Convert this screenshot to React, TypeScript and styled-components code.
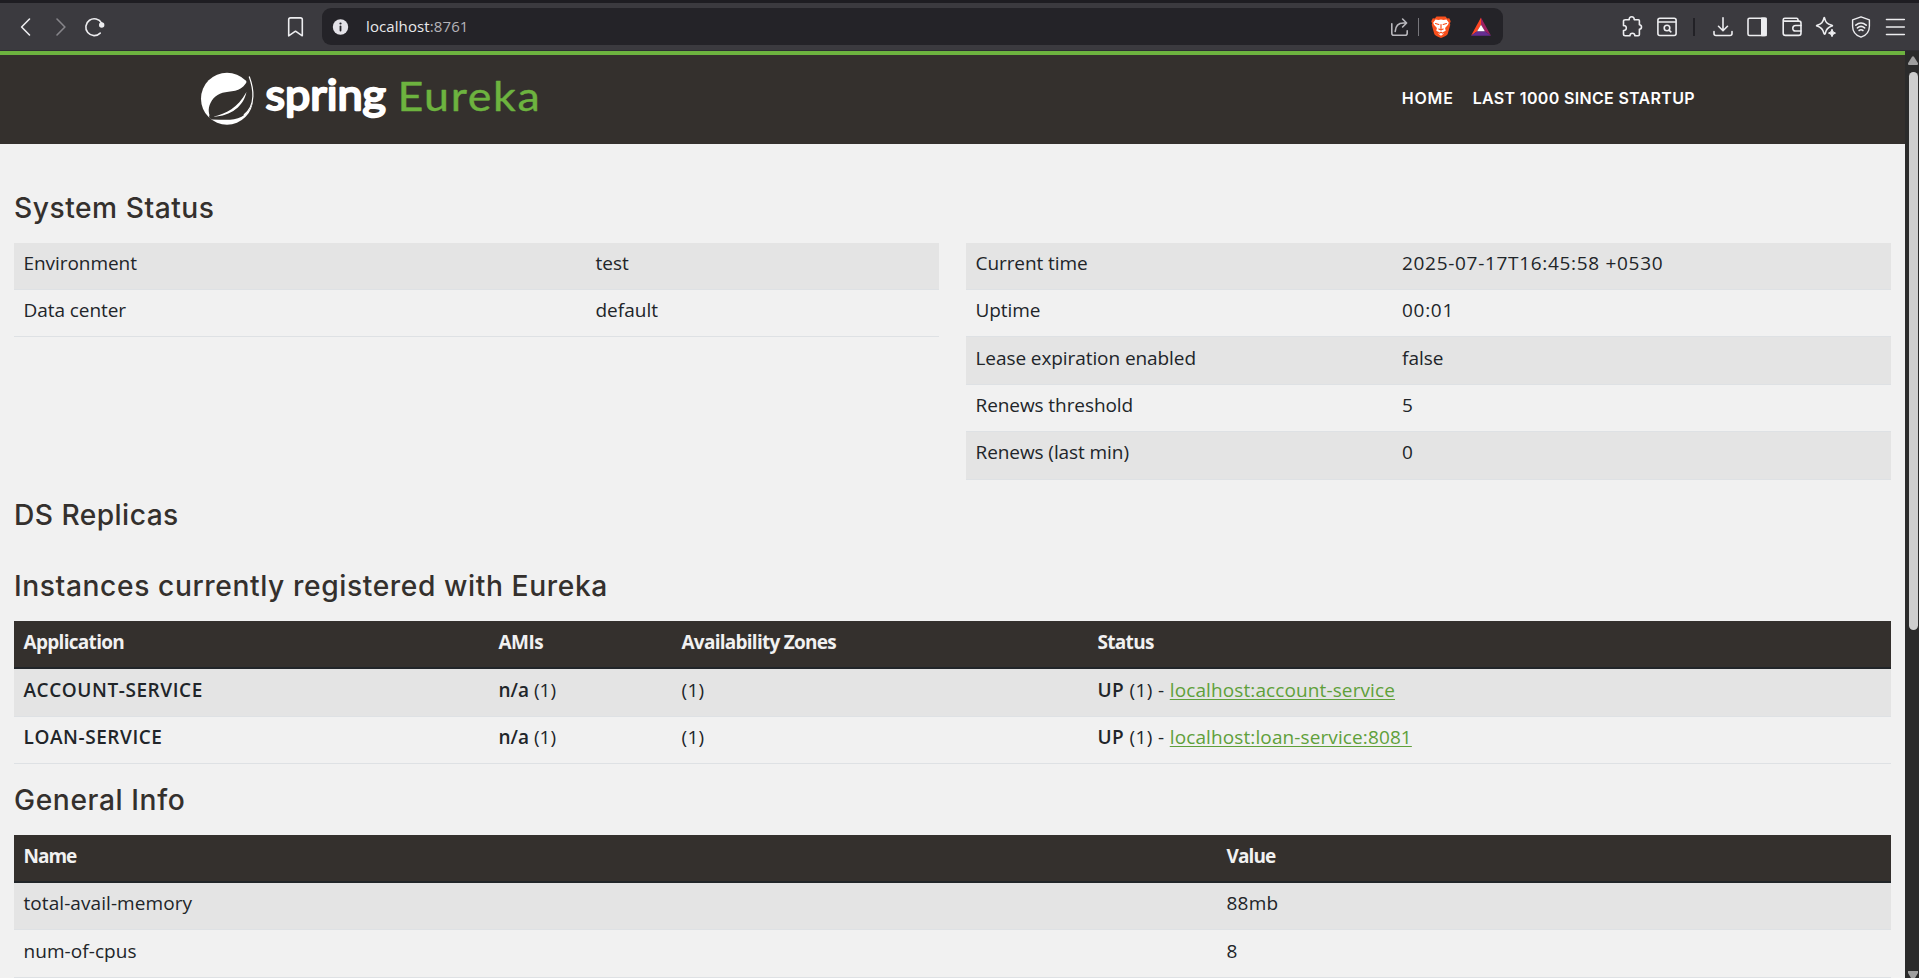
import React from 'react';
import styled, { createGlobalStyle } from 'styled-components';

const GlobalStyle = createGlobalStyle`
  * { box-sizing: border-box; }
  body { margin: 0; background: #f1f1f1; overflow: hidden; }
`;

const Window = styled.div`
  display: flex;
  flex-direction: column;
  width: 1919px;
  height: 978px;
  overflow: hidden;
  font-family: 'Open Sans', sans-serif;
`;

/* Browser chrome */
const Toolbar = styled.div`
  display: flex;
  align-items: center;
  flex: none;
  height: 51px;
  padding: 0 12px 0 14px;
  background: #3b3a3f;
  border-top: 3px solid #1e1d22;
  border-bottom: 1px solid #2f2e33;
`;

const IconGroup = styled.div<{ $gap: number; $before?: number }>`
  display: flex;
  align-items: center;
  gap: ${p => p.$gap}px;
  margin-left: ${p => p.$before ?? 0}px;
`;

const Icon = styled.svg<{ $dim?: boolean }>`
  display: block;
  flex: none;
  width: 24px;
  height: 24px;
  fill: none;
  stroke: ${p => (p.$dim ? '#86858a' : '#ededf0')};
  stroke-width: 1.6;
  stroke-linecap: round;
  stroke-linejoin: round;
`;

const Divider = styled.div<{ $light?: boolean }>`
  flex: none;
  width: ${p => (p.$light ? 1 : 2)}px;
  height: 18px;
  background: ${p => (p.$light ? '#77767b' : '#222126')};
`;

const AddressBar = styled.div`
  display: flex;
  align-items: center;
  width: 1181px;
  height: 37px;
  margin-left: 14px;
  padding: 0 9px 0 6px;
  border-radius: 9px;
  background: #242328;
`;

const Url = styled.span`
  width: 104px;
  margin: -2px 0 0 14px;
  color: #e9e9ec;
  font-size: 15px;
  line-height: 20px;
  letter-spacing: 0.1px;
  white-space: nowrap;
`;

const Port = styled.span`
  color: #b4b3b8;
`;

const Viewport = styled.div`
  display: flex;
  flex: 1;
  min-height: 0;
`;

const Page = styled.div`
  width: 1905px;
  background: #f1f1f1;
  color: #212529;
  overflow: hidden;
`;

const ScrollTrack = styled.div`
  display: flex;
  flex-direction: column;
  justify-content: space-between;
  width: 14px;
  padding: 5px 1px 0 3px;
  background: #2b2b2b;
`;

const ScrollThumb = styled.div`
  width: 9px;
  height: 558px;
  margin: 7px 0 auto 1px;
  border-radius: 5px;
  background: #cecece;
`;

const ScrollArrow = styled.svg`
  display: block;
  width: 10px;
  height: 9px;
  fill: #9f9f9f;
`;

/* Page header */
const Header = styled.header`
  display: flex;
  justify-content: space-between;
  height: 93px;
  padding: 0 210px 0 200px;
  border-top: 4px solid #6db33f;
  background: #34302d;
`;

const Logo = styled.svg`
  display: block;
  width: 350px;
  height: 80px;
  margin-top: 5px;
  font-family: Lato, sans-serif;
`;

const Nav = styled.nav`
  display: flex;
  gap: 19px;
  padding-top: 33px;
`;

const NavLink = styled.a<{ $spacing: number }>`
  color: #fff;
  font: 600 16px/20px Inter, sans-serif;
  letter-spacing: ${p => p.$spacing}px;
`;

/* Page content */
const Content = styled.main`
  display: flex;
  flex-direction: column;
  padding: 46px 14px 0;
`;

const Heading = styled.h1<{ $before?: number; $after?: number; $spacing: number }>`
  margin: ${p => p.$before ?? 0}px 0 ${p => p.$after ?? 19}px;
  padding-top: 1px;
  height: 34px;
  color: #34302d;
  font: 500 28.2px/34px Inter, sans-serif;
  letter-spacing: ${p => p.$spacing}px;
`;

const StatusColumns = styled.div`
  display: grid;
  grid-template-columns: 925px 925px;
  gap: 27px;
  align-items: start;
`;

const Table = styled.div`
  display: flex;
  flex-direction: column;
`;

const Row = styled.div<{ $cols: string; $striped?: boolean; $tall?: boolean; $low?: boolean }>`
  display: grid;
  grid-template-columns: ${p => p.$cols};
  height: ${p => (p.$tall ? 48 : 47)}px;
  padding-top: ${p => (p.$low ? 7 : 6)}px;
  border-bottom: 1px solid #dee1e4;
  background: ${p => (p.$striped ? '#e4e4e4' : '#f1f1f1')};
`;

const HeadRow = styled(Row)`
  height: 48px;
  padding-top: 7px;
  border-bottom: 2px solid #212529;
  background: #34302d;
  color: #f1f1f1;
  font-weight: 700;
`;

const Cell = styled.div<{ $spacing?: number }>`
  padding-left: 9.5px;
  font-size: 19px;
  line-height: 28px;
  letter-spacing: ${p => p.$spacing ?? 0}px;
  white-space: pre;
`;

const Strong = styled.b<{ $spacing?: number }>`
  font-weight: 600;
  letter-spacing: ${p => p.$spacing ?? 0}px;
`;

const InstanceLink = styled.a`
  color: #5fa03a;
  letter-spacing: 0.11px;
  text-decoration: underline;
  text-decoration-thickness: 1px;
  text-underline-offset: 2px;
`;

const environment = [
  { name: 'Environment', value: 'test' },
  { name: 'Data center', value: 'default' },
];

const runtime = [
  { name: 'Current time', value: '2025-07-17T16:45:58 +0530', spacing: 0.69 },
  { name: 'Uptime', value: '00:01', spacing: 0.7 },
  { name: 'Lease expiration enabled', value: 'false', tall: true, low: true },
  { name: 'Renews threshold', value: '5' },
  { name: 'Renews (last min)', value: '0', tall: true },
];

const instances = [
  { app: 'ACCOUNT-SERVICE', link: 'localhost:account-service', tall: true },
  { app: 'LOAN-SERVICE', link: 'localhost:loan-service:8081', tall: false },
];

const general = [
  { name: 'total-avail-memory', value: '88mb', tall: false },
  { name: 'num-of-cpus', value: '8', tall: true },
];

const ENV_COLS = '572px 1fr';
const RUNTIME_COLS = '426.5px 1fr';
const INSTANCE_COLS = '475px 183px 416px 1fr';
const GENERAL_COLS = '1203px 1fr';

const BrowserToolbar = () => (
  <Toolbar>
    <IconGroup $gap={10.5}>
      <Icon viewBox="0 0 24 24"><path d="M15.500 4 7.600 12l7.900 8" /></Icon>
      <Icon viewBox="0 0 24 24" $dim><path d="m8 4 7.900 8L8 20" /></Icon>
      <Icon viewBox="0 0 24 24">
        <path d="M17.200 18.100A8.400 8.400 0 1 1 18.600 8.200" />
        <circle cx="18.700" cy="10" r="1.900" fill="#ededf0" />
      </Icon>
    </IconGroup>
    <IconGroup $gap={0} $before={177}>
      <Icon viewBox="0 0 24 24"><path d="M4.700 20.800V4.600q0-1.700 1.800-1.700h10q1.800 0 1.800 1.700v16.200l-6.800-4.600Z" /></Icon>
    </IconGroup>
    <AddressBar>
      <Icon viewBox="0 0 24 24">
        <circle cx="12.500" cy="12" r="7.700" fill="#e3e2e8" stroke="none" />
        <path d="M12.500 11.500v4" stroke="#242328" strokeWidth="1.800" />
        <circle cx="12.500" cy="8.500" r="1.100" fill="#242328" stroke="none" />
      </Icon>
      <Url>localhost<Port>:8761</Port></Url>
      <IconGroup $gap={0} $before={917.5}>
        <Icon viewBox="0 0 24 24">
          <g stroke="#b9b8bd">
            <path d="M3.800 8.800v9.400q0 2 2 2h11.400q2 0 2-2v-2.400" />
            <path d="M7.200 16.500c.3-5.400 3.300-8.500 8.300-8.500h2.800M14.600 4l4 4-4 4" />
          </g>
        </Icon>
      </IconGroup>
      <IconGroup $gap={10} $before={6.5}>
        <Divider $light />
        <Icon viewBox="0 0 24 24">
          <path d="M7.500 1.500h9l1.700 1.900 2-.1 1.500 3-.8 2.100.4 1.400-2.600 9.200c-.4 1-3.200 2.800-6.700 4-3.500-1.200-6.300-3-6.700-4L2.700 9.800l.4-1.400-.8-2.100 1.500-3 2 .1Z" fill="#f9501d" stroke="none" />
          <path d="m6.500 4.600 3 .5 2.500-.5 2.500.5 3-.5 2.300 3.200-.8 2-2.900 3.200.6 2.800-3 1.500 1 1.500-2.700 2-2.700-2 1-1.500-3-1.500.6-2.800L5 9.800l-.8-2Z" fill="#fff" stroke="none" />
          <path d="m6.500 8.500 3.300 1M17.500 8.500l-3.300 1M12 9.500v4.300M9.800 14l2.200 1 2.200-1M10.300 18.200l1.700-1 1.700 1" stroke="#f9501d" strokeWidth="1.200" />
        </Icon>
      </IconGroup>
      <IconGroup $gap={0} $before={15.5}>
        <Icon viewBox="0 0 24 24">
          <g stroke="none">
            <path d="M12 2.500v7.200L8.100 16.200 2 20.800Z" fill="#ff4724" />
            <path d="M12 2.500v7.200l3.900 6.500 6.100 4.600Z" fill="#9e1f63" />
            <path d="M2 20.800h20l-6.100-4.600H8.100Z" fill="#662d91" />
            <path d="m12 9.700 3.900 6.500H8.100Z" fill="#fff" />
          </g>
        </Icon>
      </IconGroup>
    </AddressBar>
    <IconGroup $gap={11} $before={117}>
      <Icon viewBox="0 0 24 24">
        <path d="M5.500 4.700h3.700c-.2-1.800 1-3 2.500-3s2.700 1.200 2.500 3h4.200q1 0 1 1v4c1.200.1 2.100 1.100 2.100 2.300s-.9 2.200-2.100 2.400v5.200q0 1.200-1.200 1.200h-3.400c.1-1.700-1-2.600-2.400-2.600S9.800 19 10 20.800H5.200q-1.700 0-1.700-1.700v-3.600c1.700.1 2.800-.9 2.800-2.500S5.200 10.400 3.500 10.600V6q0-1.300 2-1.300Z" />
      </Icon>
      <Icon viewBox="0 0 24 24">
        <rect x="2.900" y="3.300" width="18.200" height="17.200" rx="2" />
        <path d="M3.500 7h17" />
        <circle cx="12" cy="13" r="2.800" /><path d="m14.200 15.300 1.700 1.500" />
      </Icon>
    </IconGroup>
    <IconGroup $gap={15.5} $before={14}>
      <Divider />
      <IconGroup $gap={10.5}>
        <Icon viewBox="0 0 24 24"><path d="M12 2.800v13M7.500 11.300l4.500 4.500 4.500-4.500M3 16.500v2q0 2 2 2h14q2 0 2-2v-2" /></Icon>
        <Icon viewBox="0 0 24 24">
          <rect x="3" y="3.300" width="18" height="17.200" rx="1.500" />
          <path d="M16.800 3.300H21v17.200h-4.200Z" fill="#ededf0" />
        </Icon>
        <Icon viewBox="0 0 24 24">
          <path d="M3.200 4.800q0-1.500 1.700-1.500h11.700q1.400 0 1.600 2.700M3.200 4.800v13.400q0 2.200 2.200 2.200h13.400q2.200 0 2.200-2.200V8.100q0-2-2-2H4.600q-1.400 0-1.400-1.300" />
          <path d="M21 10.500h-5.400q-2.800 0-2.800 2.800t2.800 2.700H21" />
        </Icon>
        <Icon viewBox="0 0 24 24">
          <path d="M10.500 2.900c1.100 4.600 2.400 6 7.300 7.400q1.300.4 0 .8c-3.600 1.100-5.500 2.600-6.500 7.200q-.8 1.600-1.400 0c-1-4.300-2.700-6-6.700-7.200q-1.300-.4 0-.8c4.400-1.300 5.800-2.900 6.800-7.400q.2-.8.500 0Z" />
          <path d="M18 14.500q.5 3 3.500 3.600-3 .6-3.500 3.600-.5-3-3.500-3.600 3-.6 3.500-3.600Z" fill="#ededf0" strokeWidth="1" />
        </Icon>
        <Icon viewBox="0 0 24 24">
          <path d="m12 1.800 8.400 3v6.400c0 5.600-3.400 9.200-8.400 11-5-1.800-8.400-5.400-8.400-11V4.800Z" strokeWidth="1.400" />
          <path d="M6.800 10.200q5.200-4.400 10.400 0M8.400 12.900q3.600-3 7.200 0M10.100 15.500q1.900-1.400 3.800 0" />
        </Icon>
        <Icon viewBox="0 0 24 24"><path d="M3.500 4.500h17.800M3.500 12h17.800M3.500 19.500h17.800" /></Icon>
      </IconGroup>
    </IconGroup>
  </Toolbar>
);

const SpringLogo = () => (
  <Logo viewBox="200 60 350 80">
    <circle cx="227" cy="98.700" r="26" fill="#fff" />
    <path d="M249.200 75.500c2.800 7 4.600 14 4.300 21-.5 12-8.500 21-19.500 22.800-7 1-14 .2-22 .1-3.500-4.500-4.500-10.500-1.500-16.500 3.500-7 9.500-10.400 18-11.200 9.500-.8 17-3 20.700-16.200Z" fill="#34302d" />
    <path d="M249.200 76.500c2.400 6.500 4 13 3.700 20-.3 8-3.400 14-9 18.500" fill="none" stroke="#fff" strokeWidth="1.200" />
    <path d="M246.500 92c-3 14-15 24-33.500 24.800 13.500-3.300 24.500-8.800 33.500-24.800Z" fill="#fff" />
    <circle cx="211.500" cy="116.700" r="2.400" fill="#34302d" />
    <text x="265.500" y="109.700" fill="#fff" stroke="#fff" strokeWidth="2.300" strokeLinejoin="round" fontSize="42.500" textLength="120.500" lengthAdjust="spacingAndGlyphs">spring</text>
    <text x="397.500" y="110.700" fill="#6db33f" stroke="#6db33f" strokeWidth="0.400" strokeLinejoin="round" fontSize="40.500" letterSpacing="1.500" textLength="144" lengthAdjust="spacingAndGlyphs">Eureka</text>
  </Logo>
);

export default function App() {
  return (
    <Window>
      <GlobalStyle />
      <BrowserToolbar />
      <Viewport>
        <Page>
          <Header>
            <SpringLogo />
            <Nav>
              <NavLink $spacing={0.8}>HOME</NavLink>
              <NavLink $spacing={0.33}>LAST 1000 SINCE STARTUP</NavLink>
            </Nav>
          </Header>
          <Content>
            <Heading $spacing={0.52}>System Status</Heading>
            <StatusColumns>
              <Table>
                {environment.map((r, i) => (
                  <Row key={r.name} $cols={ENV_COLS} $striped={i % 2 === 0}>
                    <Cell $spacing={-0.06}>{r.name}</Cell>
                    <Cell>{r.value}</Cell>
                  </Row>
                ))}
              </Table>
              <Table>
                {runtime.map((r, i) => (
                  <Row key={r.name} $cols={RUNTIME_COLS} $striped={i % 2 === 0} $tall={r.tall} $low={r.low}>
                    <Cell $spacing={-0.08}>{r.name}</Cell>
                    <Cell $spacing={r.spacing}>{r.value}</Cell>
                  </Row>
                ))}
              </Table>
            </StatusColumns>
            <Heading $before={17} $after={37} $spacing={0.44}>DS Replicas</Heading>
            <Heading $spacing={0.6}>Instances currently registered with Eureka</Heading>
            <Table>
              <HeadRow $cols={INSTANCE_COLS}>
                <Cell $spacing={-0.7}>Application</Cell>
                <Cell $spacing={-0.5}>AMIs</Cell>
                <Cell $spacing={-0.74}>Availability Zones</Cell>
                <Cell $spacing={-0.7}>Status</Cell>
              </HeadRow>
              {instances.map((r, i) => (
                <Row key={r.app} $cols={INSTANCE_COLS} $striped={i % 2 === 0} $tall={r.tall} $low={r.tall}>
                  <Cell><Strong $spacing={0.56}>{r.app}</Strong></Cell>
                  <Cell><Strong>n/a</Strong> (1)</Cell>
                  <Cell $spacing={0.3}>(1)</Cell>
                  <Cell $spacing={0.38}><Strong $spacing={0.4}>UP</Strong> (1) - <InstanceLink>{r.link}</InstanceLink></Cell>
                </Row>
              ))}
            </Table>
            <Heading $before={18} $spacing={0.6}>General Info</Heading>
            <Table>
              <HeadRow $cols={GENERAL_COLS}>
                <Cell $spacing={-1}>Name</Cell>
                <Cell $spacing={-0.9}>Value</Cell>
              </HeadRow>
              {general.map((r, i) => (
                <Row key={r.name} $cols={GENERAL_COLS} $striped={i % 2 === 0} $tall={r.tall} $low={r.tall}>
                  <Cell $spacing={0.07}>{r.name}</Cell>
                  <Cell $spacing={0.2}>{r.value}</Cell>
                </Row>
              ))}
            </Table>
          </Content>
        </Page>
        <ScrollTrack>
          <ScrollArrow viewBox="0 0 10 9"><path d="M4 .8q1-1.300 2 0l4 6.500q.3 1.700-1 1.700H1q-1.300 0-1-1.700Z" /></ScrollArrow>
          <ScrollThumb />
          <ScrollArrow viewBox="0 0 10 9"><path d="M0 2h10v2L7 9H3L0 4Z" /></ScrollArrow>
        </ScrollTrack>
      </Viewport>
    </Window>
  );
}
